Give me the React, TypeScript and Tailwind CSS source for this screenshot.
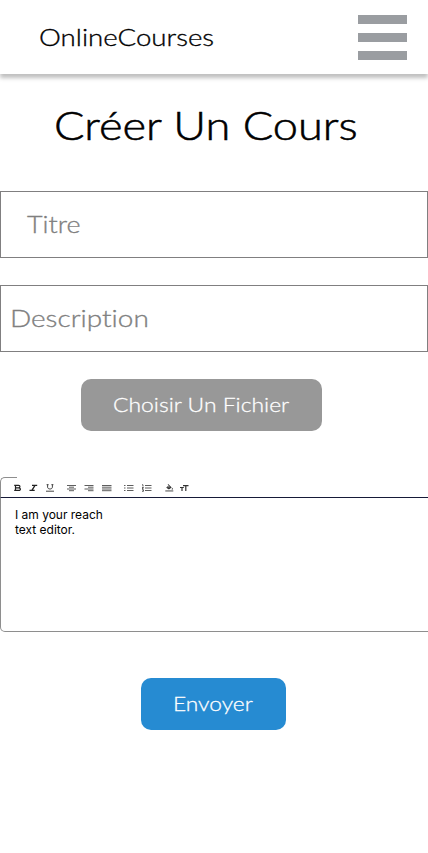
import type { ReactNode } from "react";

function Wide({ className, children }: { className: string; children: ReactNode }) {
  return (
    <span className={`block origin-left whitespace-nowrap font-light [-webkit-text-stroke-width:0.014em] [font-variant-ligatures:none] ${className}`}>
      {children}
    </span>
  );
}

function Lines({ d, className }: { d: string; className: string }) {
  return (
    <svg className={className} width="10" height="8" viewBox="0 0 10 8" stroke="#555" strokeWidth="0.95" fill="none">
      <path d={d} />
    </svg>
  );
}

function Toolbar() {
  return (
    <div className="flex h-5 pt-[7px] pl-[14px]">
      <svg width="8" height="8" viewBox="0 0 8 8" fill="none" stroke="#222" strokeWidth="1.2">
        <path d="M0.2 1.4H4.6C6.4 1.4 6.4 3.8 4.6 3.8H1.6M4.6 3.8C7 3.8 7 6.4 4.8 6.4H0.2M1.5 1.4V6.4" />
      </svg>
      <svg className="ml-[7px]" width="9" height="8" viewBox="0 0 9 8" fill="none" stroke="#222" strokeWidth="1.3">
        <path d="M3 1.4H8.2M0.5 6.3H5.7M6 1.4L2.9 6.3" />
      </svg>
      <svg className="ml-2" width="8" height="8" viewBox="0 0 8 8" fill="none" stroke="#444" strokeWidth="1">
        <path d="M1.6 0.5V3.2C1.6 5.6 6.4 5.6 6.4 3.2V0.5M0 7.2H8M0.6 0.7H2.6M5.4 0.7H7.4" />
      </svg>
      <Lines className="ml-[13px]" d="M0 1.5H9M2 3.2H7M0 5H9M2 6.7H7" />
      <Lines className="ml-[7px]" d="M0.5 1.5H9.5M4 3.2H9.5M0.5 5H9.5M4 6.7H9.5" />
      <Lines className="ml-2" d="M0 1.5H9.5M0 3.2H9.5M0 5H9.5M0 6.7H9.5" />
      <Lines className="ml-3" d="M0 1.5H1.5M3 1.5H9.5M0 4H1.5M3 4H9.5M0 6.5H1.5M3 6.5H9.5" />
      <Lines className="ml-2" d="M0 0.8H1V2.5M3 1.5H9.5M0 3.5H1.5L0 4.8H1.5M3 4H9.5M0 5.8H1.5V7.3H0M3 6.5H9.5" />
      <svg className="ml-[13px]" width="9" height="8" viewBox="0 0 9 8" fill="#333">
        <path d="M2.6 0.3L3.2 0L6.7 3.4L4.3 5.3H3.3L1.2 3.5L3.7 1.5ZM7.3 3.7C8.4 5.2 8 5.6 7.3 5.6C6.6 5.6 6.3 5.2 7.3 3.7Z" />
        <path d="M2.3 3.2H5.2L3.9 2Z" fill="#aaa" />
        <path d="M0.3 6.5H8.3V7.4H0.3Z" />
      </svg>
      <svg className="ml-[6px]" width="9" height="8" viewBox="0 0 9 8" fill="none" stroke="#333" strokeWidth="1.2">
        <path d="M3 1.6H8.5M5.8 1.6V7M0 3.5H3.8M2 3.5V7" />
      </svg>
    </div>
  );
}

export default function App() {
  return (
    <div className="h-[853px] w-[428px] overflow-hidden bg-white font-['Lato',sans-serif] text-black">
      <header className="flex h-[74px] items-start justify-between pl-[39px] pr-[21px] shadow-[0_4px_4px_rgba(0,0,0,0.25)]">
        <Wide className="mt-[19px] scale-x-[1.152] text-2xl leading-9">OnlineCourses</Wide>
        <button aria-label="Menu" className="mt-[15px] flex w-[49px] flex-col gap-[9px]">
          <span className="h-[9px] bg-[#9a9da1]" />
          <span className="h-[9px] bg-[#9a9da1]" />
          <span className="h-[9px] bg-[#9a9da1]" />
        </button>
      </header>
      <h1 className="mt-[27px] h-12 pl-[54px] text-[40px] leading-[49px]">
        <Wide className="scale-x-[1.129]">Créer Un Cours</Wide>
      </h1>
      <div className="mt-[42px] flex h-[67px] items-center border border-[#807f80] pb-0.5 pl-[26px] text-2xl text-[#807f7f]">
        <Wide className="scale-x-[1.12]">Titre</Wide>
      </div>
      <div className="mt-[27px] flex h-[67px] items-center border border-[#807f80] pb-0.5 pl-[9px] text-2xl text-[#807f7f]">
        <Wide className="scale-x-[1.165]">Description</Wide>
      </div>
      <button className="ml-[81px] mt-[27px] flex h-[52px] w-[241px] items-center rounded-[10px] bg-[#989898] pb-0.5 pl-8 text-xl text-white">
        <Wide className="scale-x-[1.145]">Choisir Un Fichier</Wide>
      </button>
      <section className="mt-[46px] h-[155px] w-[440px] font-['Inter',sans-serif]">
        <div className="relative">
          <span className="absolute left-0 top-0 h-5 w-[17px] rounded-tl-[5px] border-l border-t border-[#8e8e8e]" />
          <Toolbar />
        </div>
        <div className="h-[135px] rounded-bl-[5px] border border-[#8e8e8e] border-t-[#161a38] pl-[14px] pt-[9px] text-xs leading-[15px] tracking-[-0.01px]">
          I am your reach
          <br />
          text editor.
        </div>
      </section>
      <button className="ml-[141px] mt-[46px] flex h-[52px] w-[145px] items-center rounded-[10px] bg-[#268bd2] pb-0.5 pl-8 text-xl text-white">
        <Wide className="scale-x-[1.138]">Envoyer</Wide>
      </button>
    </div>
  );
}
